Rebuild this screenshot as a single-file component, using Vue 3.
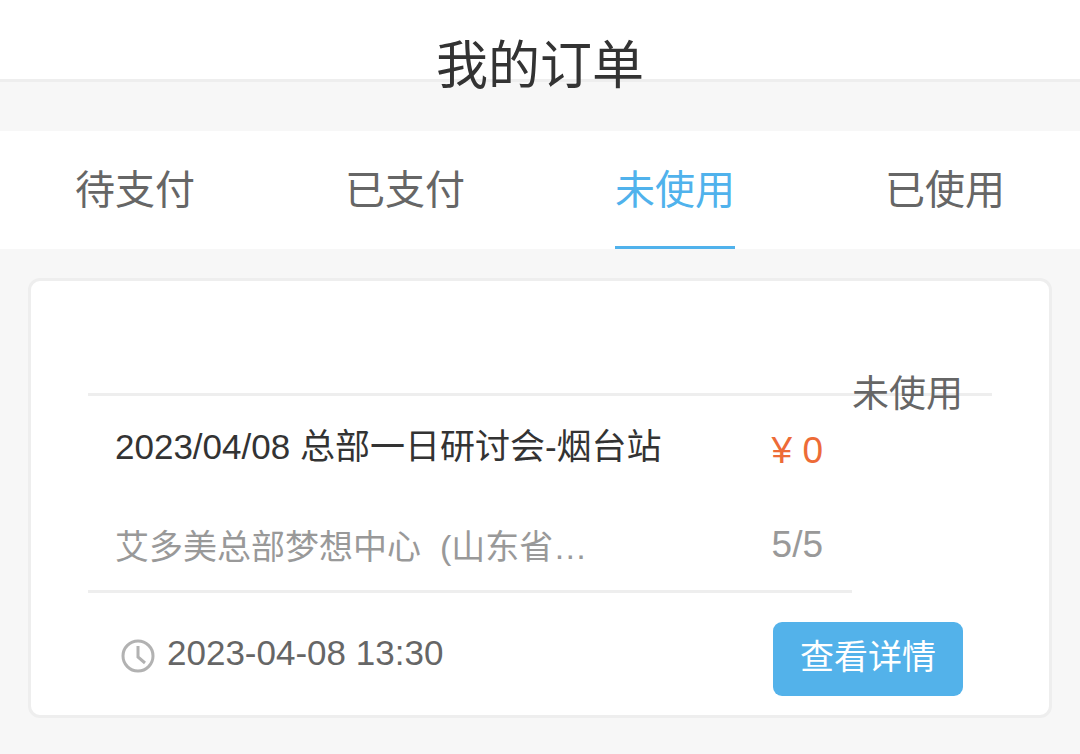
<script setup>
import { ref } from 'vue'

const tabs = ['待支付', '已支付', '未使用', '已使用']
const active = ref(2)
const order = {
  status: '未使用',
  title: '2023/04/08 总部一日研讨会-烟台站',
  price: '¥ 0',
  place: '艾多美总部梦想中心  (山东省…',
  count: '5/5',
  time: '2023-04-08 13:30'
}
</script>

<template>
  <div class="page">
    <header class="header"><h1>我的订单</h1></header>
    <nav class="tabs">
      <button
        v-for="(tab, i) in tabs"
        :key="tab"
        type="button"
        class="tab"
        :class="{ active: i === active }"
        @click="active = i"
      ><span>{{ tab }}</span></button>
    </nav>
    <article class="card">
      <div class="status-row"><span class="status">{{ order.status }}</span></div>
      <div class="details">
        <div class="line">
          <h2>{{ order.title }}</h2>
          <span class="price">{{ order.price }}</span>
        </div>
        <div class="line second">
          <span class="place">{{ order.place }}</span>
          <span class="count">{{ order.count }}</span>
        </div>
      </div>
      <footer class="foot">
        <svg class="clock" viewBox="0 0 34 34" aria-hidden="true">
          <circle cx="17" cy="17" r="15" />
          <path d="M17 7V18L24 24" />
        </svg>
        <time datetime="2023-04-08T13:30">{{ order.time }}</time>
        <button type="button" class="more">查看详情</button>
      </footer>
    </article>
  </div>
</template>

<style>
body {
  background: #f7f7f7;
}
</style>

<style scoped>
.page {
  font-family: "Liberation Sans", "Noto Sans CJK SC", sans-serif;
  color: #666;
}
.header {
  height: 79px;
  background: #fff;
  border-bottom: 3px solid #eee;
  text-align: center;
}
h1 {
  margin: 0;
  padding-top: 28px;
  font-size: 52px;
  line-height: 76px;
  font-weight: 400;
  color: #333;
}
.tabs {
  display: grid;
  grid-template-columns: repeat(4, 1fr);
  margin-top: 49px;
  background: #fff;
}
.tab {
  height: 118px;
  padding: 0;
  border: 0;
  background: none;
  font: inherit;
  font-size: 40px;
  color: #666;
}
.tab span {
  display: inline-block;
  padding-top: 4px;
  line-height: 111px;
  border-bottom: 3px solid transparent;
}
.tab.active span {
  color: #50b2ec;
  border-color: #50b2ec;
}
.card {
  margin: 29px 28px 0;
  padding: 0 57px 19px;
  border: 3px solid #eee;
  border-radius: 12px;
  background: #fff;
}
.status-row {
  height: 112px;
  border-bottom: 3px solid #eee;
  display: flex;
  justify-content: flex-end;
  padding-right: 29px;
}
.status {
  height: 54px;
  margin-top: 87px;
  font-size: 37px;
  line-height: 54px;
}
.details {
  margin-right: 140px;
  padding: 24px 29px 18px 27px;
  border-bottom: 3px solid #eee;
}
.line {
  display: flex;
  justify-content: space-between;
  height: 54px;
  line-height: 54px;
}
.second {
  margin-top: 44px;
  color: #999;
}
h2 {
  margin: 0;
  font-size: 35px;
  font-weight: 400;
  color: #333;
}
.price {
  font-size: 37px;
  line-height: 62px;
  color: #ed6b37;
}
.place {
  white-space: pre;
  font-size: 34px;
  line-height: 58px;
}
.count {
  font-size: 37px;
  line-height: 54px;
}
.foot {
  display: flex;
  align-items: center;
  padding: 29px 29px 0 33px;
}
.clock {
  width: 34px;
  height: 34px;
  margin: 0 12px 6px 0;
  fill: none;
  stroke: #b2b2b2;
  stroke-width: 3;
}
time {
  margin-bottom: 12px;
  font-size: 35px;
  line-height: 50px;
}
.more {
  width: 190px;
  height: 74px;
  margin-left: auto;
  padding: 0 0 10px;
  border: 0;
  border-radius: 9px;
  background: #53b2ea;
  color: #fff;
  font: inherit;
  font-size: 34px;
}
</style>
